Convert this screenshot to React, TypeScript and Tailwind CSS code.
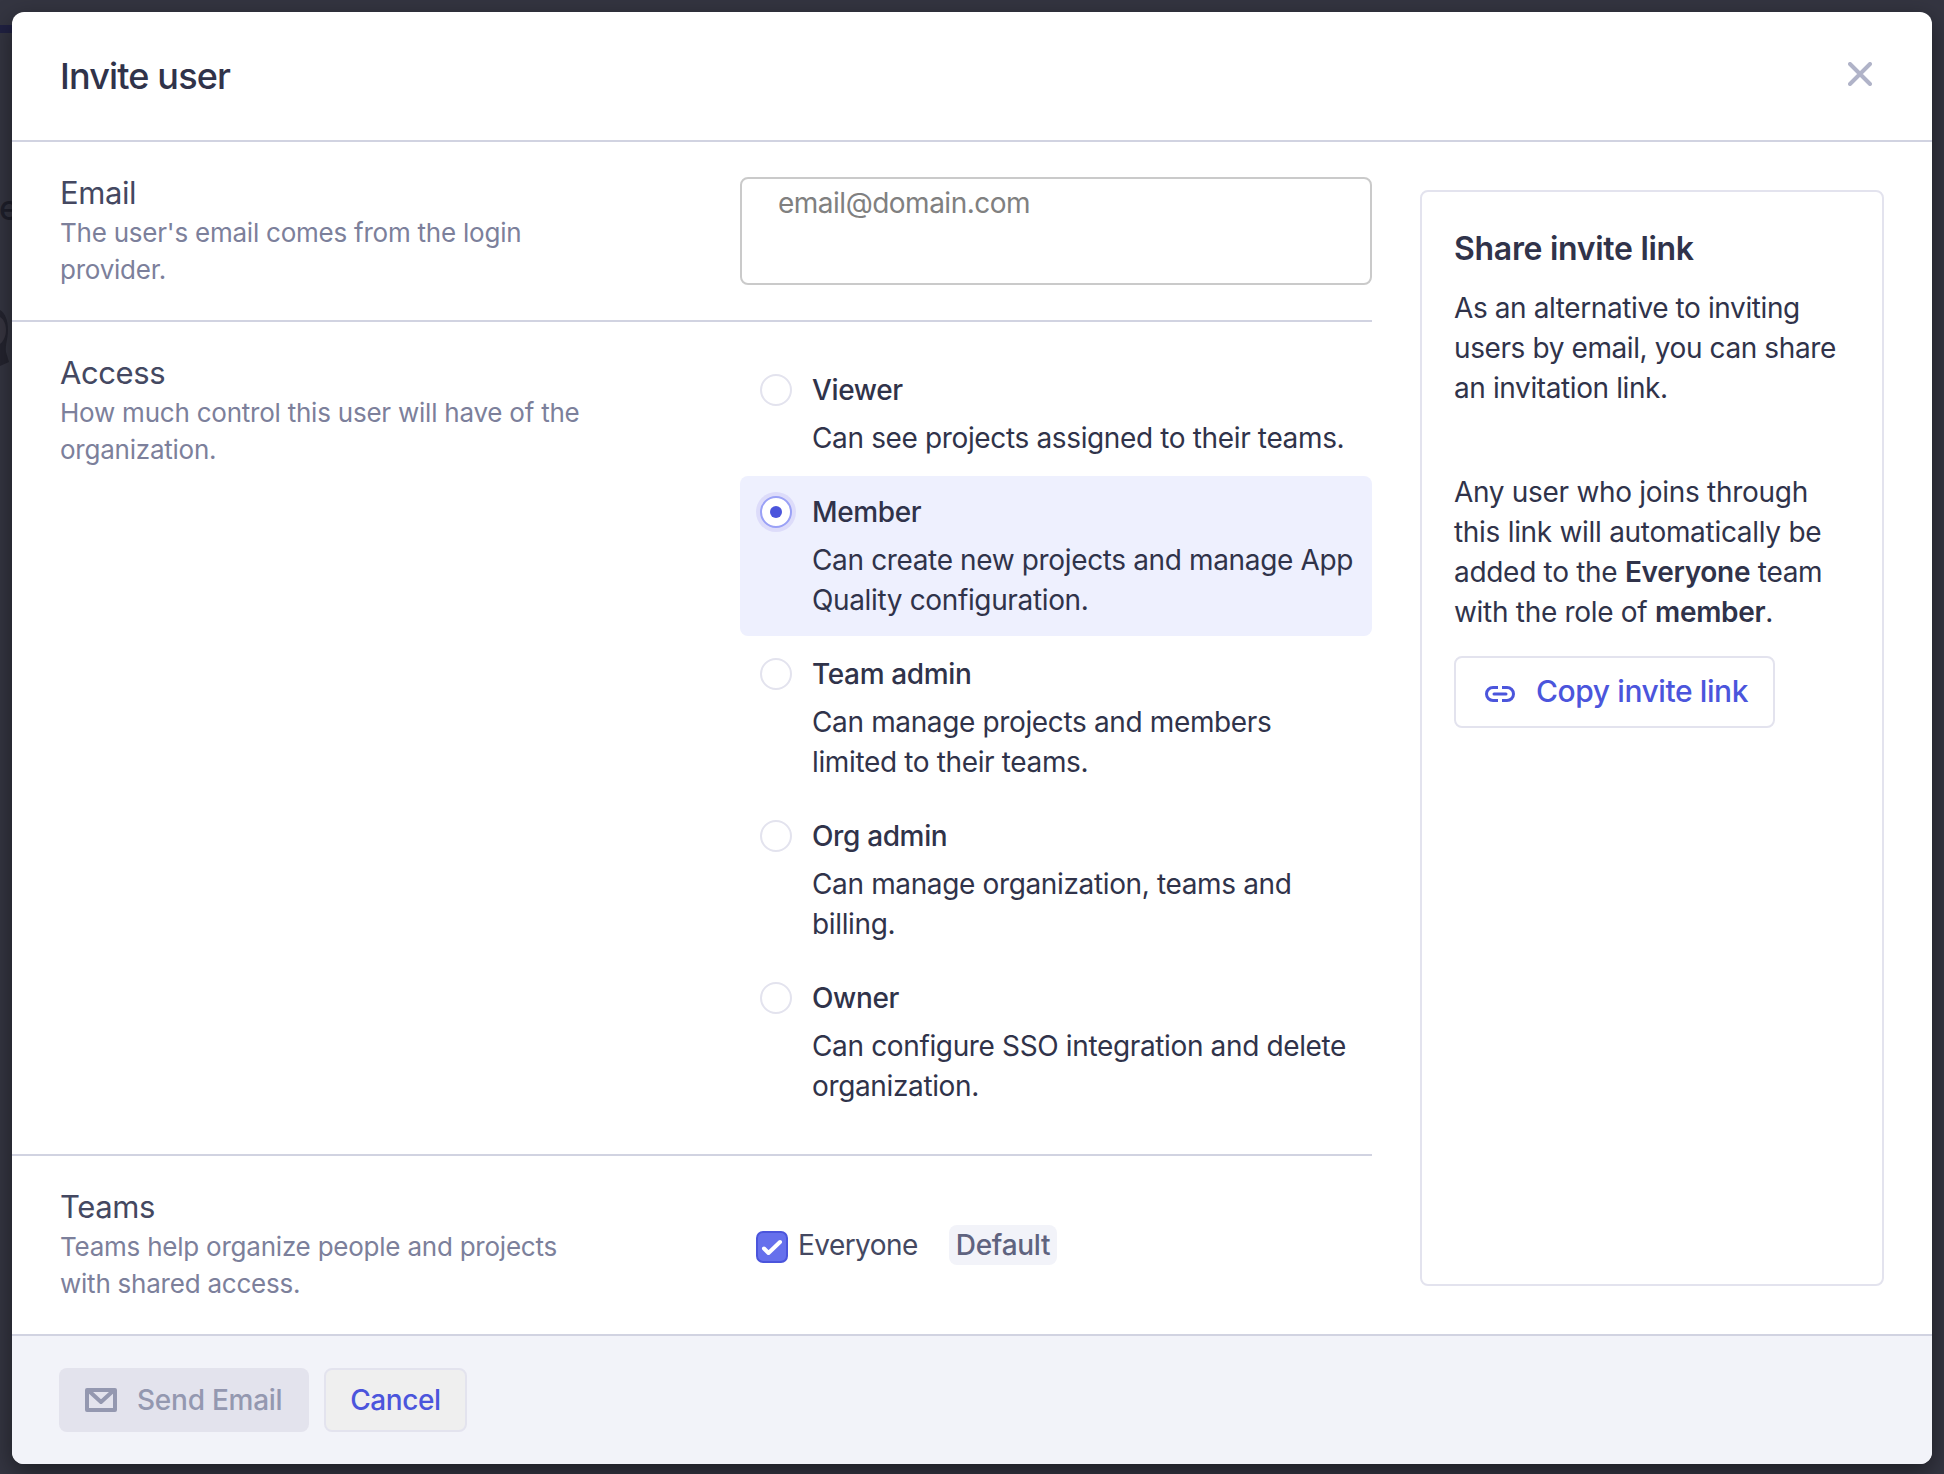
import type { ReactNode } from "react";

const roles = [
  { name: "Viewer", description: "Can see projects assigned to their teams." },
  { name: "Member", description: "Can create new projects and manage App Quality configuration.", selected: true },
  { name: "Team admin", description: "Can manage projects and members limited to their teams." },
  { name: "Org admin", description: "Can manage organization, teams and billing." },
  { name: "Owner", description: "Can configure SSO integration and delete organization." },
];

function Section({ title, hint, className, children }: { title: string; hint: string; className: string; children: ReactNode }) {
  return (
    <section className={`flex pl-12 border-[#d1d3e1] ${className}`}>
      <div className="w-[680px] shrink-0 pt-[31px]">
        <h2 className="text-[31px] leading-10 tracking-[-0.4px] text-[#444861]">{title}</h2>
        <p className="mt-[1px] w-[540px] text-[26px] leading-[37px] tracking-[-0.23px] text-[#7c809b]">{hint}</p>
      </div>
      <div className="w-[632px]">{children}</div>
    </section>
  );
}

function Radio({ selected }: { selected?: boolean }) {
  if (selected) {
    return (
      <span className="w-8 h-8 mt-1 shrink-0 rounded-full border-2 border-[#9aa1f6] bg-white ring-4 ring-[#dddcfa] flex items-center justify-center">
        <span className="w-3 h-3 rounded-full bg-[#4b55dc]" />
      </span>
    );
  }
  return <span className="w-8 h-8 mt-1 shrink-0 rounded-full border-2 border-[#e3e3ee] bg-white" />;
}

export default function App() {
  return (
    <div className="w-[1944px] h-[1474px] overflow-hidden relative p-3 bg-[#343541] font-['Inter','Liberation_Sans',sans-serif] text-[#30334a]">
      {/* page behind the overlay */}
      <div className="absolute left-0 top-[25px] w-3 h-2 bg-[#202142]" />
      <span className="absolute left-[-1px] top-[185px] text-[34px] leading-[46px] font-medium text-[#1e1f2b]">e</span>
      <svg className="absolute left-0 top-[306px] w-3 h-[62px]" viewBox="0 0 12 62">
        <path d="M0 4c5 3 8 10 8 20 0 9-3 15-2 22l3 10-9 4z" fill="#24242f" />
        <path d="M0 11c4 2 6 8 6 13s-2 11-6 14z" fill="#373540" />
      </svg>

      <div className="relative w-[1920px] h-[1452px] rounded-[12px] overflow-hidden bg-white shadow-[0_8px_24px_rgba(0,0,0,0.45)] flex flex-col">
        <header className="h-[130px] shrink-0 border-b-2 border-[#d1d3e1] flex items-center justify-between pl-12 pr-[60px]">
          <h1 className="text-[36px] leading-10 font-medium tracking-[-0.85px]">Invite user</h1>
          <svg className="w-6 h-6 mb-1" viewBox="0 0 24 24" fill="none" stroke="#b0b3c8" strokeWidth="4" strokeLinecap="round">
            <path d="M2 2l20 20M22 2L2 22" />
          </svg>
        </header>

        <div className="flex h-[1192px] shrink-0">
          <div className="w-[1360px]">
            <Section className="h-[180px] border-b-2" title="Email" hint="The user's email comes from the login provider.">
              <div className="mt-[35px] h-[108px] rounded-[8px] border-2 border-[#cacaca] px-9 pt-1 text-[28px] leading-10 tracking-[-0.5px] text-[#808080]">
                email@domain.com
              </div>
            </Section>

            <Section className="h-[834px] border-b-2" title="Access" hint="How much control this user will have of the organization.">
              <div className="pt-8 flex flex-col gap-0.5">
                {roles.map((role) => (
                  <div
                    key={role.name}
                    className={`flex gap-5 rounded-[8px] pl-5 py-4 ${role.selected ? "bg-[#eef0fe]" : ""}`}
                  >
                    <Radio selected={role.selected} />
                    <div className="text-[28px] leading-10 tracking-[-0.36px]">
                      <div className="font-medium mb-2">{role.name}</div>
                      <p className="w-[548px]">{role.description}</p>
                    </div>
                  </div>
                ))}
              </div>
            </Section>

            <Section className="h-[178px]" title="Teams" hint="Teams help organize people and projects with shared access.">
              <div className="pt-[69px] pl-4 flex items-start text-[28px] leading-10">
                <span className="w-8 h-8 mt-1.5 rounded-[7px] border-2 border-[#4b55dc] bg-[#6670ec] flex items-center justify-center">
                  <svg className="w-7 h-7 shrink-0" viewBox="0 0 28 28" fill="none" stroke="#fff" strokeWidth="4" strokeLinecap="round" strokeLinejoin="round">
                    <path d="M6 15.5l4.5 4.5L22 9" />
                  </svg>
                </span>
                <span className="ml-2.5 w-[119px] tracking-[-0.55px] text-[#444861]">Everyone</span>
                <span className="ml-8 w-[108px] text-center rounded-[8px] bg-[#f2f3f9] font-medium tracking-[-0.3px] text-[#5f637f]">Default</span>
              </div>
            </Section>
          </div>

          <aside className="ml-12 mt-12 w-[464px] h-[1096px] rounded-[8px] border-2 border-[#e3e3ee] pl-8 pt-[37px]">
            <h3 className="text-[32px] leading-10 font-semibold tracking-[-0.3px]">Share invite link</h3>
            <p className="mt-[19px] w-[400px] text-[28px] leading-10 tracking-[-0.4px]">
              As an alternative to inviting users by email, you can share an invitation link.
            </p>
            <p className="mt-16 w-[380px] text-[28px] leading-10 tracking-[-0.3px]">
              Any user who joins through this link will automatically be added to the <b className="font-semibold">Everyone</b> team with the role of{" "}
              <b className="font-semibold">member</b>.
            </p>
            <button className="mt-6 w-[321px] h-[72px] rounded-[8px] border-2 border-[#e3e3ee] flex items-center pl-[29px] pb-0.5 text-[30px] font-medium tracking-[-0.42px] text-[#4b55dc]">
              <svg className="w-[30px] h-4 mt-1.5 mr-[21px]" viewBox="0 0 30 16" fill="none" stroke="currentColor" strokeWidth="3">
                <path d="M13 1.5H8a6.5 6.5 0 0 0 0 13h5M17 1.5h5a6.5 6.5 0 0 1 0 13h-5" />
                <path d="M9 8h12" strokeLinecap="round" />
              </svg>
              Copy invite link
            </button>
          </aside>
        </div>

        <footer className="grow border-t-2 border-[#d1d3e1] bg-[#f2f3f9] flex gap-[15px] pl-[47px] pt-8 text-[28px] font-medium tracking-[-0.25px]">
          <button className="w-[250px] h-16 rounded-[8px] bg-[#e3e3ed] text-[#9498b0] flex items-center pl-[26px]">
            <svg className="w-8 h-6 mr-5" viewBox="0 0 32 24" fill="none" stroke="currentColor" strokeWidth="4" strokeLinejoin="round">
              <path d="M2 2h28v20H2z" />
              <path d="M4 3l12 11L28 3" />
            </svg>
            Send Email
          </button>
          <button className="w-[143px] h-16 rounded-[8px] border-2 border-[#e3e3ee] bg-[#efefef] text-[#4b55dc] tracking-[-0.4px]">Cancel</button>
        </footer>
      </div>
    </div>
  );
}
